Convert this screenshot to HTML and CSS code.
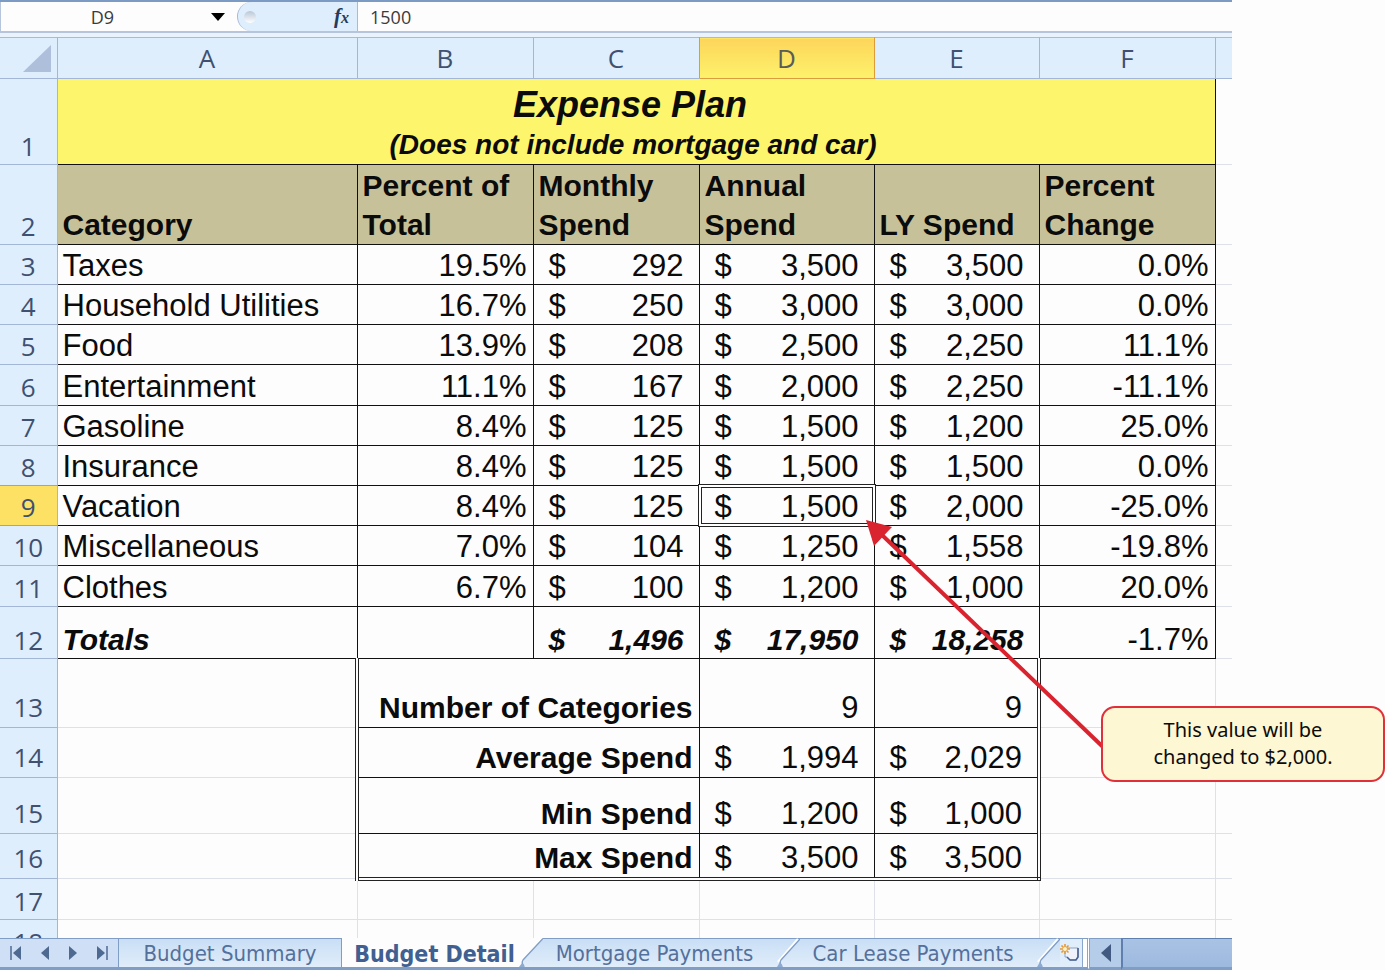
FILE: index.html
```html
<!DOCTYPE html>
<html lang="en">
<head>
<meta charset="utf-8">
<title>Expense Plan</title>
<link rel="stylesheet" href="styles.css">
</head>
<body>
<main class="workbook">
  <div class="formula-bar">
    <input class="name-box" type="text" value="D9" aria-label="Name box">
    <button class="name-drop" type="button" aria-label="Open name list"><svg width="14" height="8" viewBox="0 0 14 8"><path d="M0 0H14L7 8Z" fill="#000"/></svg></button>
    <div class="fx-area">
      <span class="knob"></span>
      <button class="fx" type="button" aria-label="Insert function">f<span class="fx-x">x</span></button>
    </div>
    <input class="formula" type="text" value="1500" aria-label="Formula">
  </div>

  <div class="grid-area">
    <table class="sheet">
      <colgroup>
        <col class="c-num"><col class="c-a"><col class="c-b"><col class="c-c"><col class="c-d"><col class="c-e"><col class="c-f"><col>
      </colgroup>
      <thead>
        <tr class="cols">
          <th class="corner"><svg width="28" height="27" viewBox="0 0 28 27"><path d="M28 0V27H0Z" fill="#aebfdc"/></svg></th>
          <th>A</th><th>B</th><th class="pre-active">C</th><th class="active">D</th><th>E</th><th>F</th><th></th>
        </tr>
      </thead>
      <tbody>
        <tr class="r1"><th>1</th><td class="title box" colspan="6"><div class="title-main">Expense Plan</div><div class="title-sub">(Does not include mortgage and car)</div></td><td></td></tr>
        <tr class="r2"><th>2</th><td class="head box">Category</td><td class="head box">Percent of Total</td><td class="head box">Monthly Spend</td><td class="head box">Annual Spend</td><td class="head box">LY Spend</td><td class="head box">Percent Change</td><td></td></tr>
        <tr><th>3</th><td class="box">Taxes</td><td class="box num">19.5%</td><td class="box"><div class="acct"><span>$</span><span>292</span></div></td><td class="box"><div class="acct"><span>$</span><span>3,500</span></div></td><td class="box"><div class="acct"><span>$</span><span>3,500</span></div></td><td class="box num">0.0%</td><td></td></tr>
        <tr><th>4</th><td class="box">Household Utilities</td><td class="box num">16.7%</td><td class="box"><div class="acct"><span>$</span><span>250</span></div></td><td class="box"><div class="acct"><span>$</span><span>3,000</span></div></td><td class="box"><div class="acct"><span>$</span><span>3,000</span></div></td><td class="box num">0.0%</td><td></td></tr>
        <tr><th>5</th><td class="box">Food</td><td class="box num">13.9%</td><td class="box"><div class="acct"><span>$</span><span>208</span></div></td><td class="box"><div class="acct"><span>$</span><span>2,500</span></div></td><td class="box"><div class="acct"><span>$</span><span>2,250</span></div></td><td class="box num">11.1%</td><td></td></tr>
        <tr class="plus"><th>6</th><td class="box">Entertainment</td><td class="box num">11.1%</td><td class="box"><div class="acct"><span>$</span><span>167</span></div></td><td class="box"><div class="acct"><span>$</span><span>2,000</span></div></td><td class="box"><div class="acct"><span>$</span><span>2,250</span></div></td><td class="box num">-11.1%</td><td></td></tr>
        <tr><th>7</th><td class="box">Gasoline</td><td class="box num">8.4%</td><td class="box"><div class="acct"><span>$</span><span>125</span></div></td><td class="box"><div class="acct"><span>$</span><span>1,500</span></div></td><td class="box"><div class="acct"><span>$</span><span>1,200</span></div></td><td class="box num">25.0%</td><td></td></tr>
        <tr><th class="pre-active-row">8</th><td class="box">Insurance</td><td class="box num">8.4%</td><td class="box"><div class="acct"><span>$</span><span>125</span></div></td><td class="box"><div class="acct"><span>$</span><span>1,500</span></div></td><td class="box"><div class="acct"><span>$</span><span>1,500</span></div></td><td class="box num">0.0%</td><td></td></tr>
        <tr><th class="active-row">9</th><td class="box">Vacation</td><td class="box num">8.4%</td><td class="box"><div class="acct"><span>$</span><span>125</span></div></td><td class="box selected"><div class="acct"><span>$</span><span>1,500</span></div></td><td class="box"><div class="acct"><span>$</span><span>2,000</span></div></td><td class="box num">-25.0%</td><td></td></tr>
        <tr><th>10</th><td class="box">Miscellaneous</td><td class="box num">7.0%</td><td class="box"><div class="acct"><span>$</span><span>104</span></div></td><td class="box"><div class="acct"><span>$</span><span>1,250</span></div></td><td class="box"><div class="acct"><span>$</span><span>1,558</span></div></td><td class="box num">-19.8%</td><td></td></tr>
        <tr class="plus"><th>11</th><td class="box">Clothes</td><td class="box num">6.7%</td><td class="box"><div class="acct"><span>$</span><span>100</span></div></td><td class="box"><div class="acct"><span>$</span><span>1,200</span></div></td><td class="box"><div class="acct"><span>$</span><span>1,000</span></div></td><td class="box num">20.0%</td><td></td></tr>
        <tr class="r12"><th>12</th><td class="box total">Totals</td><td class="box"></td><td class="box total"><div class="acct"><span>$</span><span>1,496</span></div></td><td class="box total"><div class="acct"><span>$</span><span>17,950</span></div></td><td class="box total"><div class="acct"><span>$</span><span>18,258</span></div></td><td class="box num">-1.7%</td><td></td></tr>
        <tr class="stats r13"><th>13</th><td class="pre-stats"></td><td class="box label" colspan="2">Number of Categories</td><td class="box"><div class="acct end"><span>9</span></div></td><td class="box stats-end"><div class="acct end"><span>9</span></div></td><td></td><td></td></tr>
        <tr class="stats r14"><th>14</th><td class="pre-stats"></td><td class="box label" colspan="2">Average Spend</td><td class="box"><div class="acct"><span>$</span><span>1,994</span></div></td><td class="box stats-end"><div class="acct"><span>$</span><span>2,029</span></div></td><td></td><td></td></tr>
        <tr class="stats r15"><th>15</th><td class="pre-stats"></td><td class="box label" colspan="2">Min Spend</td><td class="box"><div class="acct"><span>$</span><span>1,200</span></div></td><td class="box stats-end"><div class="acct"><span>$</span><span>1,000</span></div></td><td></td><td></td></tr>
        <tr class="stats r16"><th>16</th><td class="pre-stats"></td><td class="box label stats-foot" colspan="2">Max Spend</td><td class="box stats-foot"><div class="acct"><span>$</span><span>3,500</span></div></td><td class="box stats-end stats-foot"><div class="acct"><span>$</span><span>3,500</span></div></td><td></td><td></td></tr>
        <tr class="plus"><th>17</th><td></td><td></td><td></td><td></td><td></td><td></td><td></td></tr>
        <tr class="plus"><th>18</th><td></td><td></td><td></td><td></td><td></td><td></td><td></td></tr>
      </tbody>
    </table>
  </div>

  <nav class="tab-bar" aria-label="Sheets">
    <div class="tab-nav">
      <button type="button" aria-label="First sheet"><svg width="12" height="14" viewBox="0 0 12 14"><path d="M1 0V14" stroke="#4f6a91" stroke-width="1.5"/><path d="M11 0V14L3 7Z" fill="#4f6a91"/></svg></button>
      <button type="button" aria-label="Previous sheet"><svg width="12" height="14" viewBox="0 0 12 14"><path d="M10 0V14L2 7Z" fill="#4f6a91"/></svg></button>
      <button type="button" aria-label="Next sheet"><svg width="12" height="14" viewBox="0 0 12 14"><path d="M2 0V14L10 7Z" fill="#4f6a91"/></svg></button>
      <button type="button" aria-label="Last sheet"><svg width="12" height="14" viewBox="0 0 12 14"><path d="M11 0V14" stroke="#4f6a91" stroke-width="1.5"/><path d="M1 0V14L9 7Z" fill="#4f6a91"/></svg></button>
    </div>
    <button class="tab tab-first" type="button">Budget Summary</button>
    <button class="tab tab-active" type="button">Budget Detail</button>
    <svg class="slant" width="24" height="32" viewBox="0 0 24 32"><defs><linearGradient id="tabFill" gradientUnits="userSpaceOnUse" x1="0" y1="1" x2="0" y2="29"><stop offset="0" stop-color="#c9dff5"/><stop offset="1" stop-color="#e0edfa"/></linearGradient></defs><path d="M0 0H24V29H0Z" fill="#fdfdfd"/><path d="M24 1L4 22Q1 26 6 29H24Z" fill="url(#tabFill)"/><path d="M24 .5L4 22Q2 25 5 28" fill="none" stroke="#7f9dc5" stroke-width="1.3"/><path d="M0 29L3 25L6 29Z" fill="#8eabd1"/><path d="M0 30.5H24" stroke="#7f9dc5" stroke-width="3"/></svg>
    <button class="tab tab-mid" type="button">Mortgage Payments</button>
    <svg class="slant" width="24" height="32" viewBox="0 0 24 32"><path d="M0 0H24V29H0Z" fill="url(#tabFill)"/><path d="M0 .5H24" stroke="#7f9dc5"/><path d="M22 1L2 24" stroke="#fff" stroke-width="2.5"/><path d="M24 1L5 22Q3 25 6 28" fill="none" stroke="#7f9dc5" stroke-width="1.3"/><path d="M1 29L4 24L7 29Z" fill="#8eabd1"/><path d="M0 30.5H24" stroke="#7f9dc5" stroke-width="3"/></svg>
    <button class="tab tab-last" type="button">Car Lease Payments</button>
    <svg class="slant" width="24" height="32" viewBox="0 0 24 32"><path d="M0 0H24V29H0Z" fill="url(#tabFill)"/><path d="M0 .5H24" stroke="#7f9dc5"/><path d="M22 1L2 24" stroke="#fff" stroke-width="2.5"/><path d="M24 1L5 22Q3 25 6 28" fill="none" stroke="#7f9dc5" stroke-width="1.3"/><path d="M1 29L4 24L7 29Z" fill="#8eabd1"/><path d="M0 30.5H24" stroke="#7f9dc5" stroke-width="3"/></svg>
    <button class="new-sheet" type="button" aria-label="Insert worksheet"><svg width="22" height="20" viewBox="0 0 22 20"><path d="M5 5H18V14L16 17H10L7 14H5Z" fill="#eef3fb" stroke="#8fa4c8" stroke-width="1"/><path d="M18 5V14L16 17H10L7 14" fill="none" stroke="#46618f" stroke-width="1.6"/><path d="M5 1V11M0 6H10M1.500 2.500L8.500 9.500M8.500 2.500L1.500 9.500" stroke="#e39a35" stroke-width="1.6"/><circle cx="5" cy="6" r="2" fill="#fff3c4"/></svg></button>
    <span class="splitter"></span>
    <button class="scroll-left" type="button" aria-label="Scroll left"><svg width="10" height="18" viewBox="0 0 10 18"><path d="M10 0V18L0 9Z" fill="#425a82"/></svg></button>
    <span class="thumb"></span>
  </nav>

  <svg class="pointer" width="240" height="230" viewBox="0 0 240 230" aria-hidden="true"><path d="M16 15L237 227" stroke="#d9232e" stroke-width="4"/><path d="M0 0L26 7L8 26Z" fill="#d9232e"/></svg>
  <aside class="callout">This value will be<br>changed to $2,000.</aside>
</main>
</body>
</html>
```

FILE: styles.css
```css
* { box-sizing: border-box; }

body {
  margin: 0;
  background: #fdfdfd;
  color: #0b0b0b;
  font-family: "Liberation Sans", Arial, sans-serif;
}

button {
  margin: 0;
  padding: 0;
  border: 0;
  background: none;
  font: inherit;
  color: inherit;
}

input {
  margin: 0;
  border: 0;
  min-width: 0;
  background: #fdfdfd;
  font: 18px "Open Sans", sans-serif;
  color: #3d3a3a;
}

svg { display: block; }

.workbook {
  position: relative;
  display: flex;
  flex-direction: column;
  height: 100vh;
  padding-right: 153px;
}

/* Formula bar */
.formula-bar {
  display: flex;
  flex: none;
  height: 33px;
  border-top: 2px solid #7b9bc4;
  border-bottom: 2px solid #b7c5dc;
}
.name-box {
  width: 204px;
  padding: 0;
  text-align: center;
  border-left: 1px solid #b7c5dc;
}
.name-drop {
  display: flex;
  align-items: center;
  justify-content: center;
  width: 28px;
}
.fx-area {
  display: flex;
  align-items: center;
  justify-content: space-between;
  width: 121px;
  margin-left: 5px;
  padding: 0 8px 0 6px;
  background: #deeefd;
  border-left: 1px solid #a9bad6;
  border-right: 1px solid #a9bad6;
  border-radius: 16px 0 0 16px;
}
.knob {
  width: 12px;
  height: 12px;
  border-radius: 6px;
  background: linear-gradient(#b9c6d8, #fff);
}
.fx {
  font: italic bold 21px/24px "Liberation Serif", serif;
  color: #253b5e;
}
.fx-x { font-size: 16px; }
.formula {
  flex: 1;
  padding: 0 12px;
}

/* Grid */
.grid-area {
  flex: 1;
  min-height: 0;
  padding-top: 4px;
  overflow: hidden;
  background: #eaf2fc;
}
.sheet {
  width: 100%;
  table-layout: fixed;
  border-collapse: collapse;
  background: #fdfdfd;
  border-top: 1px solid #a9bad6;
}
.c-num { width: 57px; }
.c-a { width: 300px; }
.c-b { width: 176px; }
.c-c { width: 166px; }
.c-d { width: 175px; }
.c-e { width: 165px; }
.c-f { width: 176px; }

.sheet tr { height: 40px; }
.sheet .plus { height: 41px; }
.sheet .cols { height: 41px; }
.sheet .r1 { height: 86px; }
.sheet .r2 { height: 80px; }
.sheet .r12 { height: 52px; }
.sheet .r13 { height: 69px; }
.sheet .r14 { height: 50px; }
.sheet .r15 { height: 56px; }
.sheet .r16 { height: 45px; }

.sheet th {
  padding: 0;
  font: 26px/36px "Open Sans", sans-serif;
  color: #3f5070;
  background: #deeefd;
  border-right: 1px solid #a3b6d6;
  border-bottom: 1px solid #a3b6d6;
  vertical-align: bottom;
}
.sheet .stats th { line-height: 40px; }
.sheet .cols th { vertical-align: middle; }
.sheet .corner { padding-left: 23px; }
.sheet .pre-active { border-right-color: #dc9c3c; }
.sheet .active {
  background: linear-gradient(#fdd55a, #fdf26c);
  border-right-color: #dc9c3c;
  border-bottom-color: #dc9c3c;
  color: #5a5c58;
}
.sheet .pre-active-row { border-bottom-color: #dc9c3c; }
.sheet .active-row {
  background: #fde164;
  border-bottom-color: #dc9c3c;
}

.sheet td {
  padding: 0 6px 0 5px;
  font-size: 31px;
  line-height: 37px;
  vertical-align: bottom;
  border-right: 1px solid #dfe1ea;
  border-bottom: 1px solid #dfe1ea;
}
.sheet .stats td { line-height: 39px; }
.sheet tr > :last-child { border-right: 0; }
.sheet .box {
  border-right-color: #111;
  border-bottom-color: #111;
}
.sheet .title {
  padding: 0;
  text-align: center;
  font-weight: bold;
  font-style: italic;
  background: #fdf56c;
}
.title-main {
  padding-right: 12px;
  font-size: 36px;
  line-height: 42px;
}
.title-sub {
  padding-right: 6px;
  font-size: 28px;
  line-height: 38px;
}
.sheet .head {
  font-size: 30px;
  line-height: 39px;
  font-weight: bold;
  background: #c7c19a;
}
.sheet .num { text-align: right; }
.sheet .total {
  font-size: 30px;
  font-weight: bold;
  font-style: italic;
}
.sheet .label {
  font-size: 30px;
  font-weight: bold;
  text-align: right;
}
.sheet .pre-stats { border-right: 4px double #222; }
.sheet .stats-end { border-right: 4px double #222; }
.sheet .stats-foot { border-bottom: 4px double #222; }

.acct {
  display: flex;
  justify-content: space-between;
  padding: 0 9px 0 10px;
}
.acct.end { justify-content: flex-end; }

.sheet .selected { position: relative; }
.selected::after {
  content: "";
  position: absolute;
  inset: -2px;
  border: 1px solid #222;
  box-shadow: inset 0 0 0 2px #fff, inset 0 0 0 3px #222;
}

/* Sheet tabs */
.tab-bar {
  display: flex;
  flex: none;
  height: 32px;
  font: 22px/26px "DejaVu Sans Condensed", "Noto Sans", sans-serif;
  color: #54709b;
  background: #d5e6f7;
}
.tab-nav,
.tab,
.new-sheet,
.splitter,
.scroll-left,
.thumb {
  border-top: 1px solid #7f9dc5;
  border-bottom: 3px solid #7f9dc5;
}
.tab-nav {
  display: flex;
  align-items: center;
  justify-content: space-between;
  width: 118px;
  padding: 0 10px;
  background: #cfe0f6;
}
.tab {
  padding-top: 2px;
  background: linear-gradient(#c9dff5, #e0edfa);
  white-space: nowrap;
}
.tab-first {
  width: 224px;
  border-left: 1px solid #7f9dc5;
  border-right: 1px solid #7f9dc5;
}
.tab-active {
  width: 177px;
  padding-left: 8px;
  background: #fdfdfd;
  border-top-color: #fdfdfd;
  font-size: 23px;
  font-weight: bold;
  color: #3f6090;
}
.tab-mid { width: 233px; padding-right: 10px; }
.tab-last { width: 236px; padding-right: 10px; }
.new-sheet {
  display: flex;
  align-items: center;
  justify-content: center;
  width: 22px;
  background: #e0edfa;
}
.splitter {
  width: 8px;
  background: #fff;
  border-left: 1px solid #8aa6cc;
  border-right: 3px double #8aa6cc;
}
.scroll-left {
  display: flex;
  align-items: center;
  justify-content: center;
  width: 31px;
  background: #b6cdea;
}
.thumb {
  flex: 1;
  border-left: 2px solid #5f7fae;
  border-top-color: #5f7fae;
  background: linear-gradient(#a9c3e5, #9db9de);
}

/* Annotation over the sheet */
.pointer {
  position: absolute;
  left: 866px;
  top: 520px;
}
.callout {
  position: absolute;
  left: 1101px;
  top: 706px;
  width: 284px;
  padding: 8px 0 10px;
  border: 2px solid #e0303a;
  border-radius: 14px;
  background: #fdf7d3;
  font: 20px/27px "Noto Sans", "Open Sans", sans-serif;
  text-align: center;
}
```
